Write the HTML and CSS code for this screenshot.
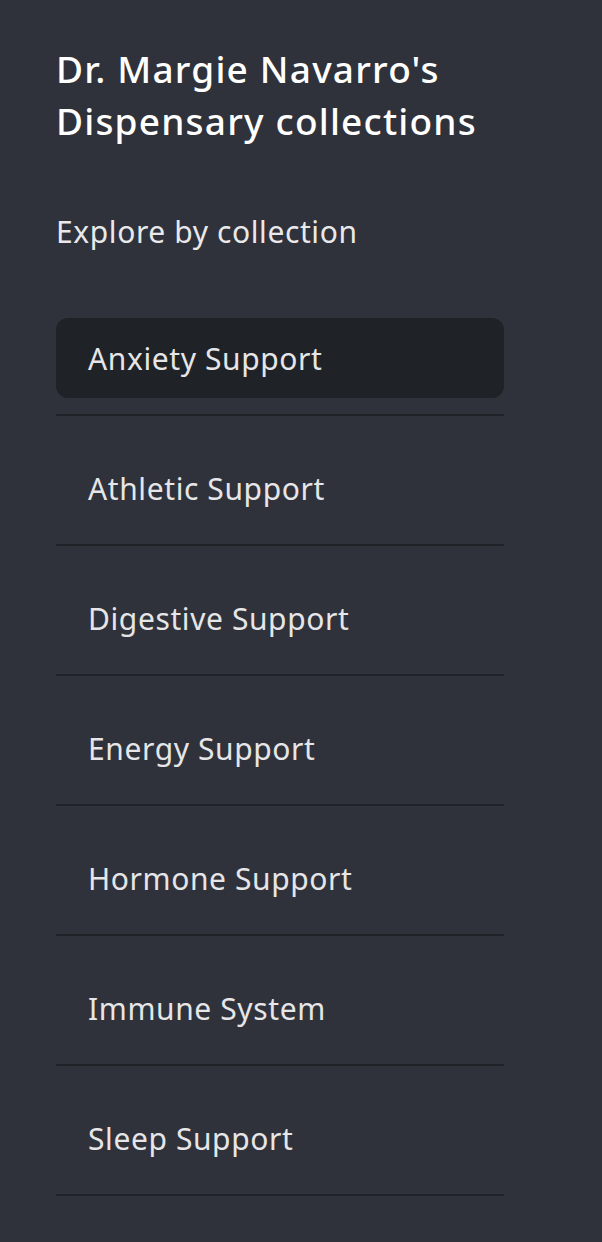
FILE: index.html
```html
<!DOCTYPE html>
<html lang="en">

<head>
    <meta charset="UTF-8">
    <meta name="viewport" content="width=device-width, initial-scale=1.0">
    <title>Dispensary collections</title>
    <link rel="stylesheet" href="styles.css">
</head>

<body>
    <div class="sidebar">
        <h1 class="title">Dr. Margie Navarro's Dispensary collections</h1>
        <p class="subtitle">Explore by collection</p>
        <ul class="collection-list">
            <li class="collection-item"><a class="collection-link active" href="#">Anxiety Support</a></li>
            <li class="collection-item"><a class="collection-link" href="#">Athletic Support</a></li>
            <li class="collection-item"><a class="collection-link" href="#">Digestive Support</a></li>
            <li class="collection-item"><a class="collection-link" href="#">Energy Support</a></li>
            <li class="collection-item"><a class="collection-link" href="#">Hormone Support</a></li>
            <li class="collection-item"><a class="collection-link" href="#">Immune System</a></li>
            <li class="collection-item"><a class="collection-link" href="#">Sleep Support</a></li>
        </ul>
    </div>
</body>

</html>
```

FILE: styles.css
```css
* {
    padding: 0;
    margin: 0;
    box-sizing: border-box;
    font-family: "Noto Sans", "Open Sans", sans-serif;
}

html, body {
    background-color: #2f323a;
}

.sidebar {
    width: 560px;
    min-height: 1242px;
    padding: 43px 56px 0 56px;
}

.title {
    color: #fff;
    font-size: 37px;
    font-weight: 500;
    line-height: 52px;
    letter-spacing: 1.2px;
    max-width: 460px;
}

.subtitle {
    margin-top: 65px;
    color: #e9e9eb;
    font-size: 30px;
    line-height: 40px;
    letter-spacing: 0.6px;
}

.collection-list {
    list-style: none;
    margin-top: 66px;
    width: 448px;
}

.collection-item {
    padding: 32px 0 16px 0;
    border-bottom: 2px solid #1f2226;
}

.collection-item:first-child {
    padding-top: 0;
}

.collection-link {
    display: flex;
    align-items: center;
    height: 80px;
    padding: 0 32px;
    border-radius: 12px;
    color: #e6e6e8;
    font-size: 30px;
    letter-spacing: 0.6px;
    text-decoration: none;
}

.collection-link.active {
    background-color: #1f2226;
}
```
